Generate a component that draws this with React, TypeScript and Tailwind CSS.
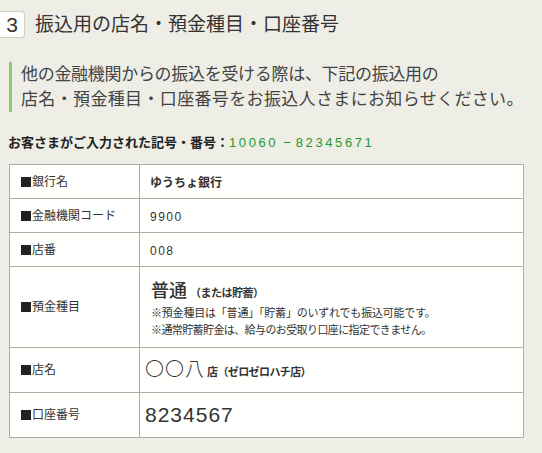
import React from "react";

const FONT = "font-['Liberation_Sans','Noto_Sans_CJK_JP',sans-serif]";

const rows: { label: string; h: string; content: React.ReactNode }[] = [
  {
    label: "銀行名",
    h: "h-[34px]",
    content: <span className="pl-[10px] text-[12px] font-bold">ゆうちょ銀行</span>,
  },
  {
    label: "金融機関コード",
    h: "h-[34px]",
    content: <span className="pl-[10px] text-[12px] tracking-[1.5px]">9900</span>,
  },
  {
    label: "店番",
    h: "h-[34px]",
    content: <span className="pl-[10px] text-[12px] tracking-[1.5px]">008</span>,
  },
  {
    label: "預金種目",
    h: "h-[81px]",
    content: (
      <div className="pl-[11px] pt-[4px]">
        <div className="leading-[24px]">
          <span className="text-[18px] font-medium">普通</span>
          <span className="ml-[3px] text-[11px] font-bold tracking-[-0.5px]">（または貯蓄）</span>
        </div>
        <p className="text-[11px] leading-[17px] tracking-[-0.2px]">※預金種目は「普通」「貯蓄」のいずれでも振込可能です。</p>
        <p className="text-[11px] leading-[17px] tracking-[-0.6px]">※通常貯蓄貯金は、給与のお受取り口座に指定できません。</p>
      </div>
    ),
  },
  {
    label: "店名",
    h: "h-[45px]",
    content: (
      <div className="pl-[5px] flex items-baseline">
        <span className="text-[19px] font-light tracking-[1px]">〇〇八</span>
        <span className="ml-[2px] text-[11px] font-bold tracking-[-0.6px]">店（ゼロゼロハチ店）</span>
      </div>
    ),
  },
  {
    label: "口座番号",
    h: "h-[45px]",
    content: <span className="pl-[5px] text-[21px] tracking-[1px]">8234567</span>,
  },
];

export default function App() {
  return (
    <div className={`w-[542px] h-[453px] bg-[#eeeee7] text-[#333] ${FONT} overflow-hidden`}>
      {/* heading */}
      <div className="flex items-center pt-[11px]">
        <div className="w-[25px] h-[27px] bg-white border border-[#cfcfc6] rounded-r-[4px] border-l-0 flex items-center justify-center text-[21px] leading-none">
          3
        </div>
        <h1 className="ml-[10px] text-[19px] leading-[27px] text-[#333]">振込用の店名・預金種目・口座番号</h1>
      </div>

      {/* lead */}
      <div className="mt-[24px] ml-[9px] border-l-[3px] border-[#8ec96c] pl-[9px] text-[17px] leading-[25px] text-[#444]">
        <p className="tracking-[-0.3px]">他の金融機関からの振込を受ける際は、下記の振込用の</p>
        <p className="tracking-[0.35px]">店名・預金種目・口座番号をお振込人さまにお知らせください。</p>
      </div>

      <p className="mt-[23px] ml-[8px] text-[13px] leading-[16px] font-bold text-[#222]">
        お客さまがご入力された記号・番号：
        <span className="text-[#1f9a2a] font-normal tracking-[2.6px]">10060</span>
        <span className="text-[#1f9a2a] font-normal mx-[5px]">−</span>
        <span className="text-[#1f9a2a] font-normal tracking-[2.6px]">82345671</span>
      </p>

      {/* table */}
      <table className="mt-[13px] ml-[9px] w-[515px] border-collapse bg-[#fffffd]">
        <tbody>
          {rows.map((r) => (
            <tr key={r.label} className={r.h}>
              <td className="w-[130px] border border-[#aeada4] pl-[11px] text-[12px] text-[#333] align-middle">
                <span className="inline-block w-[10px] h-[10px] mr-[1px] bg-[#222] align-[-1px]" />
                {r.label}
              </td>
              <td className="border border-[#aeada4] align-middle text-[#333]">{r.content}</td>
            </tr>
          ))}
        </tbody>
      </table>
    </div>
  );
}
